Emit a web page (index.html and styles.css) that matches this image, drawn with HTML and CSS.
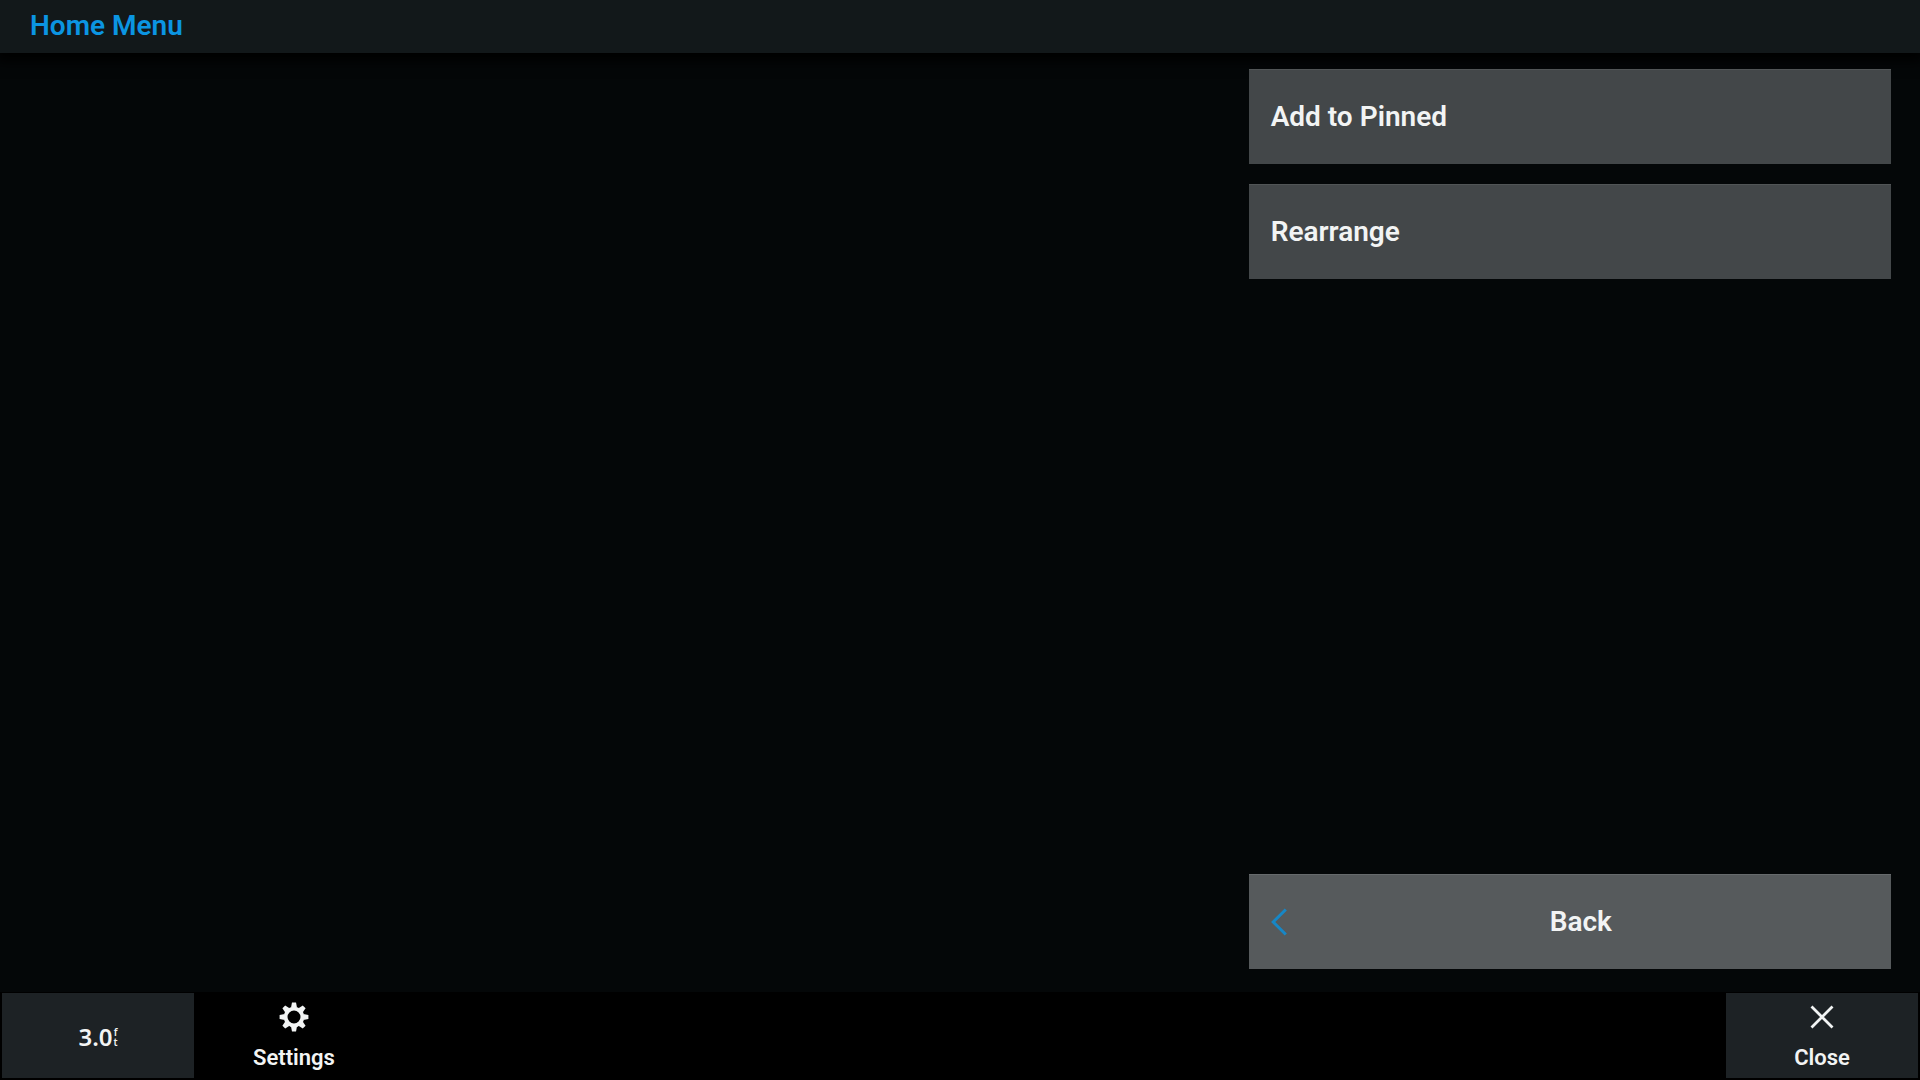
FILE: index.html
```
<!DOCTYPE html>
<html lang="en">
<head>
    <meta charset="UTF-8">
    <meta name="viewport" content="width=device-width, initial-scale=1.0">
    <title>Home Menu</title>
    <link rel="stylesheet" href="styles.css">
</head>
<body>
    <header class="header">
        <h1 class="header-title">Home Menu</h1>
    </header>

    <main class="content">
        <div class="side-menu">
            <button type="button" class="menu-button">Add to Pinned</button>
            <button type="button" class="menu-button">Rearrange</button>
            <button type="button" class="menu-button back-button">
                <svg class="back-icon" viewBox="0 0 18 28" aria-hidden="true">
                    <path d="M14.8 1.5L2.2 14l12.6 12.5" fill="none" stroke="currentColor" stroke-width="3"/>
                </svg>
                <span class="back-label">Back</span>
            </button>
        </div>
    </main>

    <footer class="footer">
        <button type="button" class="tile tile-filled depth">
            <span class="depth-value">3.0</span>
            <span class="depth-unit"><span>f</span><span>t</span></span>
        </button>
        <button type="button" class="tile">
            <svg class="tile-icon" viewBox="-15 -15 30 30" aria-hidden="true">
                <circle r="8.4" fill="none" stroke="currentColor" stroke-width="3.8"/>
                <g fill="currentColor">
                    <path id="tooth" d="M-3-9.3L-2-14.4H2L3-9.3z"/>
                    <use href="#tooth" transform="rotate(45)"/>
                    <use href="#tooth" transform="rotate(90)"/>
                    <use href="#tooth" transform="rotate(135)"/>
                    <use href="#tooth" transform="rotate(180)"/>
                    <use href="#tooth" transform="rotate(225)"/>
                    <use href="#tooth" transform="rotate(270)"/>
                    <use href="#tooth" transform="rotate(315)"/>
                </g>
            </svg>
            <span>Settings</span>
        </button>
        <button type="button" class="tile tile-filled tile-close">
            <svg class="tile-icon" viewBox="-15 -15 30 30" aria-hidden="true">
                <path d="M-10.5-10.5l21 21M10.5-10.5l-21 21" fill="none" stroke="currentColor" stroke-width="2.8"/>
            </svg>
            <span>Close</span>
        </button>
    </footer>
</body>
</html>
```
FILE: styles.css
```
* {
    margin: 0;
    padding: 0;
    box-sizing: border-box;
}
body {
    display: flex;
    flex-direction: column;
    min-height: 100vh;
    background: #040708;
    color: #f2f4f4;
    font-family: Roboto, sans-serif;
    font-weight: 600;
}
button {
    border: none;
    background: none;
    color: inherit;
    font: inherit;
    cursor: pointer;
}
.header {
    padding: 10px 30px 11px;
    background: #12181a;
    box-shadow: 0 4px 12px 4px #000;
}
.header-title {
    font-size: 28px;
    line-height: 32px;
    font-weight: 600;
    color: #0b95e2;
}
.content {
    flex: 1;
    display: flex;
    justify-content: flex-end;
    padding: 16px 29px 23px;
}
.side-menu {
    display: flex;
    flex-direction: column;
    gap: 20px;
    width: 34.5%;
}
.menu-button {
    display: flex;
    align-items: center;
    padding: 31px 22px;
    background: #434749;
    border-top: 1px solid #515556;
    font-size: 28px;
    line-height: 32px;
    text-align: left;
}
.back-button {
    gap: 4px;
    margin-top: auto;
    background: #565a5c;
    border-top-color: #666a6c;
}
.back-icon {
    width: 18px;
    height: 28px;
    color: #1787c6;
}
.back-label {
    flex: 1;
    text-align: center;
}
.footer {
    display: flex;
    gap: 4px;
    padding: 1px 2px 2px;
    background: #000;
}
.tile {
    display: flex;
    flex-direction: column;
    align-items: center;
    gap: 13px;
    width: 192px;
    padding: 9px 8px 7px;
    font-size: 22px;
    line-height: 26px;
}
.tile-filled {
    background: #1d2225;
}
.tile-close {
    margin-left: auto;
}
.tile-icon {
    width: 30px;
    height: 30px;
}
.depth {
    flex-direction: row;
    justify-content: center;
    gap: 1px;
    font-family: "Noto Sans", sans-serif;
}
.depth-value {
    font-size: 24px;
    font-weight: 600;
}
.depth-unit {
    display: flex;
    flex-direction: column;
    font-size: 10px;
    line-height: 10px;
}
```
